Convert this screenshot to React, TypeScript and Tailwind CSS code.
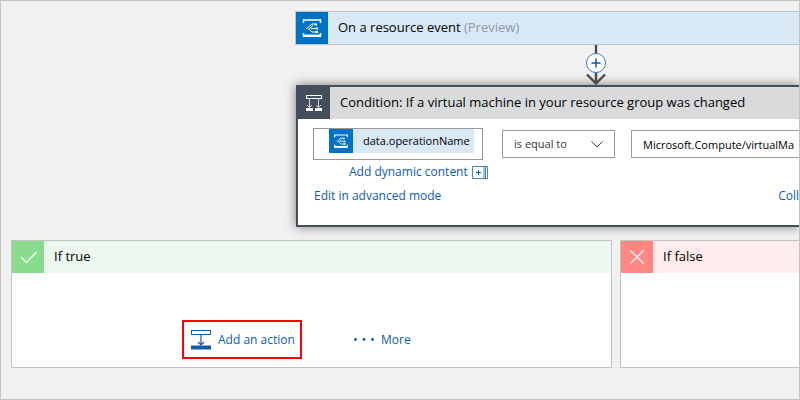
import React from "react";

function EventGridIcon({ className }: { className: string }) {
  return (
    <svg viewBox="0 0 32 32" className={className} aria-hidden="true" fill="none" stroke="#fff">
      <path d="M7.5 11V8H24.500V11M7.500 21V24H24.500V21" strokeWidth="1.500" />
      <path d="M7 23.800H25" strokeWidth="2.400" />
      <path d="M10 17L16 12H19M12.500 17.500L17 13.500M13 17L16 20H20M15 16.500H21" strokeWidth="1" />
      <path d="M18.500 12.500H21M19.500 20H22M19.500 16.500H22" strokeWidth="2" />
    </svg>
  );
}

function ConditionIcon() {
  return (
    <svg viewBox="0 0 32 32" className="size-8" aria-hidden="true" fill="none" stroke="#fff">
      <rect x="8.5" y="8.5" width="15" height="3" strokeWidth="1" />
      <path d="M11.5 12V20.500M20.500 12V20.500M9 18L11.500 20.500L14 18M18 18L20.500 20.500L23 18" strokeWidth="1" opacity="0.75" />
      <path d="M8 22.500H15M17 22.500H24" strokeWidth="3" />
    </svg>
  );
}

function AddActionIcon() {
  return (
    <svg viewBox="0 0 20 20" className="size-5" aria-hidden="true" fill="none" stroke="#0f5bab">
      <rect x="0.5" y="0.5" width="19" height="4" strokeWidth="1" />
      <path d="M10 4.500V15M7 12L10 15L13 12" strokeWidth="1.200" />
      <path d="M0 17.500H20" strokeWidth="4" />
    </svg>
  );
}

function Connector() {
  return (
    <div className="relative flex h-10 w-[602px] justify-center">
      <svg viewBox="0 0 24 40" className="h-10 w-6" aria-hidden="true" fill="none" stroke="#4b4b4b" strokeWidth="2">
        <path d="M12 0V38M3 29.500L12 38.500L21 29.500" strokeWidth="2.400" />
      </svg>
      <button
        type="button"
        aria-label="Insert a new step"
        className="absolute top-2 left-1/2 flex size-5 -translate-x-1/2 items-center justify-center rounded-full border border-[#2f78bf] bg-white"
      >
        <svg viewBox="0 0 10 10" className="size-2.5" aria-hidden="true" stroke="#0f5bab" strokeWidth="1.500">
          <path d="M5 0.500V9.500M0.500 5H9.500" />
        </svg>
      </button>
    </div>
  );
}

function Branch({
  title,
  accent,
  tint,
  frame,
  mark,
  children,
}: {
  title: string;
  accent: string;
  tint: string;
  frame: string;
  mark: string;
  children?: React.ReactNode;
}) {
  return (
    <section className={`flex flex-col border-[#c3c3c3] bg-white ${frame}`}>
      <header className={`flex h-8 items-center ${tint}`}>
        <span className={`size-8 shrink-0 ${accent}`}>
          <svg viewBox="0 0 32 32" className="size-8" aria-hidden="true" fill="none" stroke="#fff" strokeWidth="1.200">
            <path d={mark} />
          </svg>
        </span>
        <h2 className="pl-2.5 text-[13px]">{title}</h2>
      </header>
      <div className="flex h-[94px] items-end">{children}</div>
    </section>
  );
}

export default function App() {
  return (
    <main className="flex h-screen flex-col overflow-hidden border border-[#c3c3c3] bg-[#f1f1f1] pt-2.5 font-['Open_Sans','Noto_Sans',sans-serif] text-black">
      <div className="pl-[294px]">
        <section className="flex h-[34px] items-center border border-r-0 border-[#c3c3c3] bg-[#d9e8f5]">
          <EventGridIcon className="size-8 shrink-0 bg-[#0072c6]" />
          <h1 className="pl-2.5 text-[13px] whitespace-nowrap">
            On a resource event <span className="text-[#8f9ba5]">(Preview)</span>
          </h1>
        </section>
        <Connector />
      </div>

      <div className="pl-[295px]">
        <section className="border-2 border-r-0 border-[#434d5b] bg-white shadow-[0_0_10px_rgba(0,0,0,0.5)]">
          <header className="flex h-8 items-center bg-[#d8dadc]">
            <span className="size-8 shrink-0 bg-[#434d5b]">
              <ConditionIcon />
            </span>
            <h2 className="pl-2.5 text-[13px] whitespace-nowrap">
              Condition: If a virtual machine in your resource group was changed
            </h2>
          </header>
          <div className="flex h-[106px] flex-col pt-[9px] pl-[15px] text-xs">
            <div className="flex items-center text-[11px]">
              <div className="flex h-8 w-[170px] shrink-0 items-start border border-[#999] pl-[15px]">
                <span className="flex h-6 w-[145px] items-center bg-[#d9e8f5]">
                  <EventGridIcon className="size-6 shrink-0 bg-[#0072c6]" />
                  <span className="pl-2.5">data.operationName</span>
                </span>
              </div>
              <div className="relative ml-[19px] shrink-0">
                <select
                  aria-label="Comparison"
                  className="h-7 w-[113px] appearance-none border border-[#999] bg-white pl-[11px] text-[11px] text-[#333]"
                >
                  <option>is equal to</option>
                </select>
                <svg
                  viewBox="0 0 12 7"
                  className="pointer-events-none absolute top-[11px] right-3 h-[7px] w-3"
                  aria-hidden="true"
                  fill="none"
                  stroke="#444"
                >
                  <path d="M0.500 0.500L6 6L11.500 0.500" />
                </svg>
              </div>
              <input
                aria-label="Value"
                defaultValue="Microsoft.Compute/virtualMa"
                className="ml-4 h-7 min-w-0 flex-1 border border-r-0 border-[#999] bg-white pl-[11px] text-[11px]"
              />
            </div>
            <button type="button" className="ml-9 flex h-6 items-center gap-1 self-start text-[#0f5bab]">
              Add dynamic content
              <svg viewBox="0 0 16 13" className="h-[13px] w-4" aria-hidden="true" fill="none" stroke="#0f5bab">
                <path d="M0.500 0.500H12V12.500H0.500ZM12 0.500H15.500V12.500H12M13.500 0.500V12.500" opacity="0.75" />
                <path d="M6.500 4V9M4 6.500H9" />
              </svg>
            </button>
            <div className="flex h-6 items-center justify-between pl-px text-[#0f5bab]">
              <button type="button">Edit in advanced mode</button>
              <button type="button">Coll</button>
            </div>
          </div>
        </section>
      </div>

      <div className="mt-[13px] flex gap-2 pl-2.5">
        <Branch
          title="If true"
          accent="bg-[#89db8d]"
          tint="bg-[#ecf7ee]"
          frame="w-[601px] shrink-0 border"
          mark="M9 16L14.500 21.500L24.500 11"
        >
          <div className="flex items-center pb-2 pl-[170px] text-xs text-[#0f5bab]">
            <button type="button" className="flex h-[39px] w-[120px] items-center gap-[7px] border-2 border-[#f00] pl-[7px]">
              <AddActionIcon />
              Add an action
            </button>
            <button type="button" className="ml-[52px] flex items-center gap-[7px]">
              <svg viewBox="0 0 20 4" className="h-1 w-5" aria-hidden="true" fill="#0f5bab">
                <circle cx="1.5" cy="1.5" r="1.4" />
                <circle cx="10" cy="1.5" r="1.4" />
                <circle cx="18.5" cy="1.5" r="1.4" />
              </svg>
              More
            </button>
          </div>
        </Branch>
        <Branch
          title="If false"
          accent="bg-[#ff8982]"
          tint="bg-[#ffecec]"
          frame="min-w-0 flex-1 border border-r-0"
          mark="M9.500 9.500L22.500 22.500M22.500 9.500L9.500 22.500"
        />
      </div>
    </main>
  );
}
